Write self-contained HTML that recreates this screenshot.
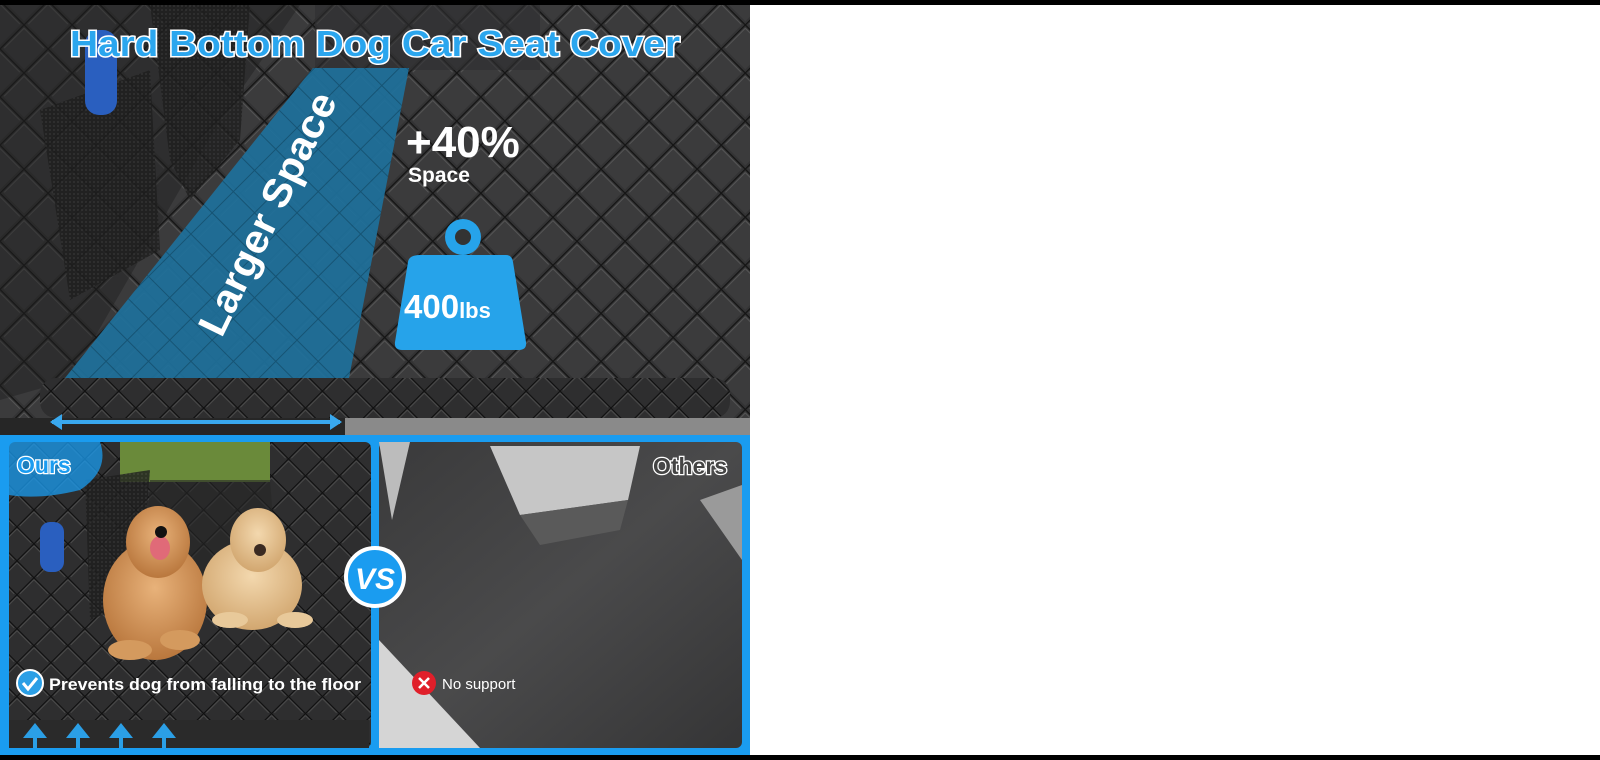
<!DOCTYPE html>
<html><head><meta charset="utf-8"><style>
html,body{margin:0;padding:0;background:#fff;}
svg{display:block}
text{font-family:"Liberation Sans","DejaVu Sans",sans-serif;font-weight:bold}
</style></head><body>
<svg width="1600" height="760" viewBox="0 0 1600 760" xmlns="http://www.w3.org/2000/svg">
<defs>
<pattern id="q" width="34" height="34" patternUnits="userSpaceOnUse" patternTransform="rotate(45)">
<rect width="34" height="34" fill="#333334"/>
<rect x="2" y="2" width="30" height="30" fill="#3b3b3c"/>
<path d="M0 0H34M0 0V34" stroke="#141414" stroke-width="2.5"/>
<path d="M3 3H31M3 3V31" stroke="#555" stroke-width="1"/>
</pattern>
<pattern id="qb" width="30" height="30" patternUnits="userSpaceOnUse" patternTransform="rotate(45)">
<rect width="30" height="30" fill="#1f6f99"/>
<path d="M0 0H30M0 0V30" stroke="#145577" stroke-width="2"/>
</pattern>
<pattern id="qs" width="24" height="24" patternUnits="userSpaceOnUse" patternTransform="rotate(45)">
<rect width="24" height="24" fill="#2e2e2f"/>
<path d="M0 0H24M0 0V24" stroke="#0f0f0f" stroke-width="2"/>
<path d="M2 2H22M2 2V22" stroke="#4a4a4a" stroke-width="1"/>
</pattern>
<pattern id="mesh" width="4" height="4" patternUnits="userSpaceOnUse">
<rect width="4" height="4" fill="#1e1e1e"/><circle cx="2" cy="2" r="1" fill="#333"/>
</pattern>
<linearGradient id="cloth" x1="0" y1="0" x2="1" y2="1">
<stop offset="0" stop-color="#3a3a3b"/><stop offset="0.5" stop-color="#4a4a4b"/><stop offset="1" stop-color="#353536"/>
</linearGradient>
<radialGradient id="dog1" cx="0.5" cy="0.4" r="0.6"><stop offset="0" stop-color="#e8b27a"/><stop offset="1" stop-color="#b9773d"/></radialGradient>
<radialGradient id="dog2" cx="0.5" cy="0.4" r="0.6"><stop offset="0" stop-color="#f3d8ae"/><stop offset="1" stop-color="#d2a770"/></radialGradient>
</defs>
<rect width="1600" height="760" fill="#fff"/>
<rect width="1600" height="5" fill="#000"/>
<rect y="755" width="1600" height="5" fill="#000"/>

<rect x="0" y="5" width="750" height="430" fill="url(#q)"/>
<polygon points="0,5 300,5 220,120 70,380 0,400" fill="#1e1e1e" opacity="0.45"/>
<polygon points="150,5 250,5 240,140 190,200 170,160" fill="url(#mesh)" opacity="0.8"/>
<polygon points="40,110 150,70 160,250 70,300" fill="url(#mesh)" opacity="0.8"/>
<rect x="85" y="30" width="32" height="85" rx="14" fill="#2a5fbf"/>
<rect x="315" y="5" width="225" height="65" fill="#2f2f30" opacity="0.6"/>
<polygon points="313,68 409,68 349,378 65,378" fill="url(#qb)" opacity="0.95"/>
<rect x="40" y="378" width="690" height="40" rx="16" fill="url(#qs)"/>
<rect x="0" y="418" width="750" height="17" fill="#262626"/>
<rect x="345" y="418" width="405" height="17" fill="#8a8a8a"/>
<path d="M52 422H340" stroke="#39a8ee" stroke-width="4"/>
<path d="M50 422L62 414V430Z M342 422L330 414V430Z" fill="#39a8ee"/>

<text x="375" y="56" text-anchor="middle" font-size="36" fill="#2ba6ee" stroke="#fff" stroke-width="3" paint-order="stroke" textLength="610" lengthAdjust="spacingAndGlyphs">Hard Bottom Dog Car Seat Cover</text>
<text transform="translate(268 214) rotate(-64)" text-anchor="middle" font-size="40" fill="#fff" textLength="265" lengthAdjust="spacingAndGlyphs" dy="13">Larger Space</text>
<text x="406" y="157" font-size="44" fill="#fff">+40%</text>
<text x="408" y="182" font-size="21" fill="#fff">Space</text>
<circle cx="463" cy="237" r="18" fill="#26a3ea"/>
<circle cx="463" cy="237" r="8" fill="#333"/>
<path d="M420 255H506Q512 255 513 262L526 342Q527 350 519 350H402Q394 350 395 342L408 262Q409 255 420 255Z" fill="#26a3ea"/>
<text x="404" y="318" font-size="33" fill="#fff">400<tspan font-size="22">lbs</tspan></text>

<rect x="0" y="435" width="750" height="320" fill="#1a9cf0"/>
<rect x="9" y="442" width="362" height="306" rx="6" fill="url(#qs)"/>
<rect x="120" y="442" width="150" height="40" fill="#6a8a3a"/>
<polygon points="150,480 270,480 280,610 140,620" fill="#262627" opacity="0.6"/>
<polygon points="85,480 150,470 140,600 90,620" fill="url(#mesh)" opacity="0.8"/>
<rect x="40" y="522" width="24" height="50" rx="10" fill="#2a5fbf"/>
<rect x="9" y="720" width="360" height="28" fill="#2a2a2a"/>
<g fill="#2b9fe6">
<path d="M33 738l-10 0 12-15 12 15-10 0v10h-4z"/><path d="M76 738l-10 0 12-15 12 15-10 0v10h-4z"/>
<path d="M119 738l-10 0 12-15 12 15-10 0v10h-4z"/><path d="M162 738l-10 0 12-15 12 15-10 0v10h-4z"/>
</g>
<ellipse cx="155" cy="600" rx="52" ry="60" fill="url(#dog1)"/>
<ellipse cx="158" cy="542" rx="32" ry="36" fill="url(#dog1)"/>
<ellipse cx="130" cy="650" rx="22" ry="10" fill="#d49a5e"/>
<ellipse cx="180" cy="640" rx="20" ry="10" fill="#d49a5e"/>
<ellipse cx="160" cy="548" rx="10" ry="12" fill="#e06a78"/>
<circle cx="161" cy="532" r="6" fill="#111"/>
<ellipse cx="252" cy="585" rx="50" ry="45" fill="url(#dog2)"/>
<ellipse cx="258" cy="540" rx="28" ry="32" fill="url(#dog2)"/>
<ellipse cx="230" cy="620" rx="18" ry="8" fill="#e8c99a"/>
<ellipse cx="295" cy="620" rx="18" ry="8" fill="#e8c99a"/>
<circle cx="260" cy="550" r="6" fill="#3a2a22"/>
<path d="M9 442H100Q110 470 80 490Q40 500 9 495Z" fill="#1a9cf0" opacity="0.75"/>
<text x="17" y="473" font-size="23" fill="#1a9cf0" stroke="#fff" stroke-width="2.5" paint-order="stroke">Ours</text>
<circle cx="30" cy="683" r="13" fill="#2b9fe6" stroke="#fff" stroke-width="2"/>
<path d="M23 683l5 6 9-11" stroke="#fff" stroke-width="3" fill="none"/>
<text x="49" y="690" font-size="17" fill="#fff" textLength="312" lengthAdjust="spacingAndGlyphs">Prevents dog from falling to the floor</text>

<rect x="379" y="442" width="363" height="306" rx="6" fill="url(#cloth)"/>
<polygon points="379,442 410,442 392,520" fill="#bcbcbc"/>
<polygon points="490,446 640,446 628,500 520,515" fill="#c6c6c6"/>
<polygon points="520,515 628,500 620,530 540,545" fill="#5a5a5a"/>
<polygon points="379,640 480,748 379,748" fill="#d5d5d5"/>
<polygon points="700,500 742,485 742,560" fill="#9a9a9a"/>
<text x="653" y="474" font-size="23" fill="#444" stroke="#fff" stroke-width="2.5" paint-order="stroke">Others</text>
<circle cx="424" cy="683" r="12" fill="#e01f2a"/>
<path d="M419 678l10 10M429 678l-10 10" stroke="#fff" stroke-width="2.5"/>
<text x="442" y="689" font-size="15" fill="#fff" style="font-weight:normal">No support</text>

<circle cx="375" cy="577" r="29" fill="#1a9cf0" stroke="#fff" stroke-width="4"/>
<text x="375" y="589" text-anchor="middle" font-size="30" font-style="italic" fill="#fff">VS</text>
</svg>
</body></html>
